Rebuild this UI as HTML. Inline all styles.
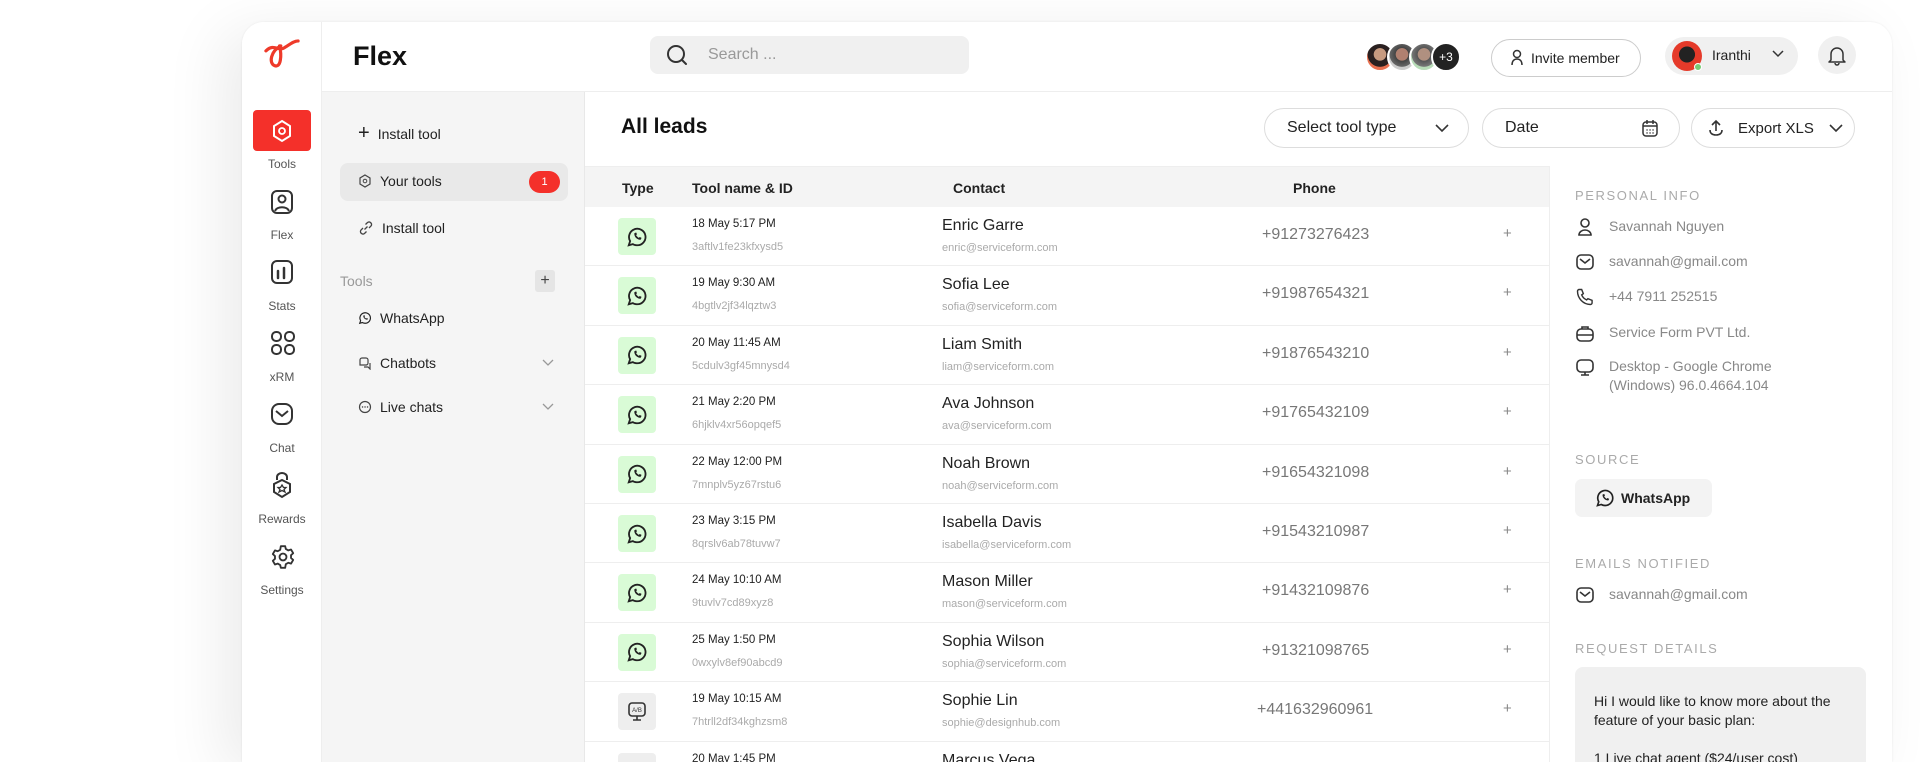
<!DOCTYPE html>
<html style="width:1920px;height:762px;overflow:hidden"><head><meta charset="utf-8"><style>
*{box-sizing:border-box;margin:0;padding:0}
html,body{width:1920px;height:762px;overflow:hidden}
body{background:#fff;font-family:"Liberation Sans",sans-serif;color:#222;position:relative}
.card{position:absolute;left:242px;top:22px;width:1650px;height:740px;background:#fff;border-radius:22px 22px 0 0;box-shadow:-20px 10px 60px rgba(0,0,0,0.08),0 0 2px rgba(0,0,0,0.08);overflow:hidden}
.a{position:absolute}
.nav{left:0;top:0;width:80px;height:740px;border-right:1px solid #eee;background:#fff}
.nl{position:absolute;width:80px;text-align:center;font-size:12px;color:#555}
.ni{position:absolute;left:28px}
.side{left:80px;top:70px;width:263px;height:670px;background:#f5f5f5;border-right:1px solid #e8e8e8}
.si{position:absolute;left:36px;font-size:14px;color:#222;display:flex;align-items:center;gap:8px}
.hdr{left:80px;top:0;width:1570px;height:70px;border-bottom:1px solid #eee}
.pill{position:absolute;border:1px solid #ddd;border-radius:20px;display:flex;align-items:center;font-size:16px;color:#222}
.th{position:absolute;font-size:14px;font-weight:bold;color:#222}
.row{position:absolute;left:343px;width:964px;height:59.4px;border-bottom:1px solid #eee}
.ic{position:absolute;left:33px;top:11px;width:38px;height:37px;border-radius:4px;background:#d9fbd6;display:flex;align-items:center;justify-content:center}
.ic.g{background:#eee}
.dt{position:absolute;left:107px;top:11px;font-size:11.5px;color:#222}
.id{position:absolute;left:107px;top:34px;font-size:11px;color:#aaa}
.nm{position:absolute;left:357px;top:10px;font-size:16px;color:#222}
.em{position:absolute;left:357px;top:35px;font-size:11px;color:#aaa}
.ph{position:absolute;left:677px;top:19px;font-size:16px;color:#777}
.pl{position:absolute;left:918px;top:18px;font-size:15px;color:#888}
.rp{left:1307px;top:144px;width:343px;height:596px;border-left:1px solid #eee}
.lab{position:absolute;left:25px;font-size:13px;letter-spacing:1.6px;color:#aaa}
.it{position:absolute;left:25px;display:flex;gap:14px;font-size:14px;color:#888;line-height:19px}
</style></head><body>
<div class="card">
 <div class="a nav">
  <svg class="a" style="left:17px;top:14px" width="46" height="42" viewBox="0 0 34 34"><path d="M4 12c6-6 10 0 14-2s8-6 12-6M16 8c-8 4-10 14-5 16s6-8 4-16" fill="none" stroke="#ee3a2a" stroke-width="2.6" stroke-linecap="round"/></svg>
  <div class="a" style="left:11px;top:88px;width:58px;height:41px;background:#f4302a;border-radius:4px"></div>
  <svg class="a" style="left:29px;top:97px" width="22" height="24" viewBox="0 0 22 24"><path d="M11 2l8 5v10l-8 5-8-5V7z" fill="none" stroke="#fff" stroke-width="2"/><circle cx="11" cy="12" r="3" fill="none" stroke="#fff" stroke-width="1.8"/></svg>
  <div class="nl" style="top:135px">Tools</div>
  <svg class="ni" style="top:167px" width="24" height="26" viewBox="0 0 24 26"><rect x="2" y="2" width="20" height="22" rx="5" fill="none" stroke="#333" stroke-width="2"/><circle cx="12" cy="10" r="3.5" fill="none" stroke="#333" stroke-width="2"/><path d="M5 22c2-5 12-5 14 0" fill="none" stroke="#333" stroke-width="2"/></svg>
  <div class="nl" style="top:206px">Flex</div>
  <svg class="ni" style="top:237px" width="24" height="26" viewBox="0 0 24 26"><rect x="2" y="2" width="20" height="22" rx="5" fill="none" stroke="#333" stroke-width="2"/><path d="M8 12v7M14 9v10" stroke="#333" stroke-width="2.5" stroke-linecap="round"/></svg>
  <div class="nl" style="top:277px">Stats</div>
  <svg class="ni" style="top:308px" width="26" height="26" viewBox="0 0 26 26"><g fill="none" stroke="#333" stroke-width="2"><rect x="2" y="2" width="9" height="9" rx="4"/><rect x="15" y="2" width="9" height="9" rx="4"/><rect x="2" y="15" width="9" height="9" rx="4"/><rect x="15" y="15" width="9" height="9" rx="4"/></g></svg>
  <div class="nl" style="top:348px">xRM</div>
  <svg class="ni" style="top:380px" width="24" height="24" viewBox="0 0 24 24"><rect x="2" y="2" width="20" height="20" rx="7" fill="none" stroke="#333" stroke-width="2"/><path d="M6 9l6 5 6-5" fill="none" stroke="#333" stroke-width="2"/></svg>
  <div class="nl" style="top:419px">Chat</div>
  <svg class="ni" style="top:450px" width="24" height="28" viewBox="0 0 24 28"><path d="M7 8V5a5 4 0 0110 0v3" fill="none" stroke="#333" stroke-width="2"/><path d="M12 8l8 4v8l-8 5-8-5v-8z" fill="none" stroke="#333" stroke-width="2"/><path d="M12 13l1.5 2.5h2.5l-2 2 1 2.5-3-1.5-3 1.5 1-2.5-2-2h2.5z" fill="none" stroke="#333" stroke-width="1.3"/></svg>
  <div class="nl" style="top:490px">Rewards</div>
  <svg class="ni" style="top:522px" width="26" height="26" viewBox="0 0 24 24"><path d="M10 2h4l.6 2.6 2.3 1.3 2.5-.8 2 3.4-2 1.8v2.6l2 1.8-2 3.4-2.5-.8-2.3 1.3L14 22h-4l-.6-2.6-2.3-1.3-2.5.8-2-3.4 2-1.8v-2.6l-2-1.8 2-3.4 2.5.8 2.3-1.3z" fill="none" stroke="#333" stroke-width="1.7" stroke-linejoin="round"/><circle cx="12" cy="12" r="3.2" fill="none" stroke="#333" stroke-width="1.7"/></svg>
  <div class="nl" style="top:561px">Settings</div>
 </div>
 <div class="a hdr">
  <div class="a" style="left:31px;top:19px;font-size:27px;font-weight:bold;color:#111">Flex</div>
  <div class="a" style="left:328px;top:14px;width:319px;height:38px;background:#f0f0f0;border-radius:8px"></div>
  <svg class="a" style="left:342px;top:20px" width="26" height="26" viewBox="0 0 26 26"><circle cx="12" cy="12" r="8" fill="none" stroke="#333" stroke-width="2"/><path d="M18 18l4 4" stroke="#333" stroke-width="2" stroke-linecap="round"/></svg>
  <div class="a" style="left:386px;top:24px;font-size:16px;color:#999">Search ...</div>
  <div class="a" style="left:1043px;top:20px;width:30px;height:30px;border-radius:50%;background:radial-gradient(circle at 50% 40%,#c79a80 30%,#2a2020 32%,#2a2020 60%,#e87050 62%);border:2px solid #fff"></div>
  <div class="a" style="left:1065px;top:20px;width:30px;height:30px;border-radius:50%;background:radial-gradient(circle at 50% 40%,#b08070 30%,#444 32%,#666 60%,#ccc 62%);border:2px solid #fff"></div>
  <div class="a" style="left:1087px;top:20px;width:30px;height:30px;border-radius:50%;background:radial-gradient(circle at 50% 40%,#b09080 30%,#555 32%,#777 60%,#b8dcb8 62%);border:2px solid #fff"></div>
  <div class="a" style="left:1109px;top:20px;width:30px;height:30px;border-radius:50%;background:#222;border:2px solid #fff;color:#fff;font-size:12px;text-align:center;line-height:26px">+3</div>
  <div class="pill" style="left:1169px;top:17px;width:150px;height:38px;font-size:14px;padding-left:18px;gap:7px;border-color:#ccc"><svg width="14" height="18" viewBox="0 0 14 18"><circle cx="7" cy="5" r="3.5" fill="none" stroke="#333" stroke-width="1.5"/><path d="M2 16c0-4 2-6 5-6s5 2 5 6" fill="none" stroke="#333" stroke-width="1.5"/></svg>Invite member</div>
  <div class="a" style="left:1343px;top:15px;width:133px;height:38px;background:#f0f0f0;border-radius:19px"></div>
  <div class="a" style="left:1350px;top:19px;width:30px;height:30px;border-radius:50%;background:radial-gradient(circle at 50% 45%,#222 35%,#e53a2a 37%)"></div>
  <div class="a" style="left:1372px;top:41px;width:8px;height:8px;border-radius:50%;background:#7c7;border:1px solid #fff"></div>
  <div class="a" style="left:1390px;top:25px;font-size:14px;color:#222">Iranthi</div>
  <svg class="a" style="left:1449px;top:27px" width="14" height="10" viewBox="0 0 14 10"><path d="M2 2l5 5 5-5" fill="none" stroke="#333" stroke-width="1.5"/></svg>
  <div class="a" style="left:1496px;top:14px;width:38px;height:38px;border-radius:50%;background:#f0f0f0"></div>
  <svg class="a" style="left:1505px;top:22px" width="20" height="22" viewBox="0 0 20 22"><path d="M4 16V10a6 6 0 0112 0v6l2 2H2z M8 19a2 2 0 004 0" fill="none" stroke="#333" stroke-width="1.5" stroke-linejoin="round"/></svg>
 </div>
 <div class="a side">
  <div class="si" style="top:30px"><span style="font-size:20px;font-weight:300">+</span>Install tool</div>
  <div class="a" style="left:18px;top:71px;width:228px;height:38px;background:#e9e9e9;border-radius:8px"></div>
  <div class="si" style="top:81px"><svg width="14" height="14" viewBox="0 0 14 14"><path d="M7 1l5 3v6l-5 3-5-3V4z" fill="none" stroke="#444" stroke-width="1.2"/><circle cx="7" cy="7" r="1.8" fill="none" stroke="#444"/></svg>Your tools</div>
  <div class="a" style="left:207px;top:79px;width:31px;height:22px;background:#f4302a;border-radius:11px;color:#fff;font-size:11px;text-align:center;line-height:22px">1</div>
  <div class="si" style="top:128px"><svg width="16" height="16" viewBox="0 0 16 16"><path d="M6.5 9.5l3-3M5 8l-2 2a2.5 2.5 0 003.5 3.5l2-2M11 8l2-2a2.5 2.5 0 00-3.5-3.5l-2 2" fill="none" stroke="#444" stroke-width="1.3"/></svg>Install tool</div>
  <div class="a" style="left:18px;top:181px;font-size:14px;color:#999">Tools</div>
  <div class="a" style="left:213px;top:178px;width:20px;height:22px;background:#e5e5e5;border-radius:3px;text-align:center;line-height:22px;font-size:16px;color:#444">+</div>
  <div class="si" style="top:218px"><svg width="14" height="14" viewBox="0 0 24 24"><path d="M3 21l1.5-4.5A9 9 0 1112 21a9 9 0 01-4.5-1.2z" fill="none" stroke="#222" stroke-width="2"/><path d="M9 8c0 4 3 7 7 7l1-2-2-1-1 1c-1-.5-2.5-2-3-3l1-1-1-2z" fill="#222"/></svg>WhatsApp</div>
  <div class="si" style="top:263px"><svg width="14" height="14" viewBox="0 0 14 14"><path d="M2 9V4a2 2 0 012-2h4a2 2 0 012 2v3a2 2 0 01-2 2H4z M6 11h4l2 2V7" fill="none" stroke="#444" stroke-width="1.2"/></svg>Chatbots</div>
  <div class="si" style="top:307px"><svg width="14" height="14" viewBox="0 0 14 14"><circle cx="7" cy="7" r="5.5" fill="none" stroke="#444" stroke-width="1.2"/><path d="M4.5 7h.1M7 7h.1M9.5 7h.1" stroke="#444" stroke-width="1.4" stroke-linecap="round"/></svg>Live chats</div>
  <svg class="a" style="left:220px;top:267px" width="12" height="8" viewBox="0 0 12 8"><path d="M1 1l5 5 5-5" fill="none" stroke="#999" stroke-width="1.3"/></svg>
  <svg class="a" style="left:220px;top:311px" width="12" height="8" viewBox="0 0 12 8"><path d="M1 1l5 5 5-5" fill="none" stroke="#999" stroke-width="1.3"/></svg>
 </div>
 <div class="a" style="left:379px;top:93px;font-size:21px;font-weight:bold;color:#111">All leads</div>
 <div class="pill" style="left:1022px;top:86px;width:205px;height:40px;padding-left:22px">Select tool type<svg style="position:absolute;right:18px" width="16" height="10" viewBox="0 0 16 10"><path d="M2 2l6 6 6-6" fill="none" stroke="#333" stroke-width="1.6"/></svg></div>
 <div class="pill" style="left:1240px;top:86px;width:198px;height:40px;padding-left:22px">Date<svg style="position:absolute;right:20px" width="18" height="20" viewBox="0 0 18 20"><rect x="2" y="4" width="14" height="14" rx="3" fill="none" stroke="#333" stroke-width="1.5"/><path d="M2 8h14M6 2v4M12 2v4" stroke="#333" stroke-width="1.5"/><path d="M6 12h.1M9 12h.1M12 12h.1M6 15h.1M9 15h.1M12 15h.1" stroke="#333" stroke-width="1.4" stroke-linecap="round"/></svg></div>
 <div class="pill" style="left:1449px;top:86px;width:164px;height:40px;padding-left:16px;font-size:15px;gap:14px"><svg width="16" height="18" viewBox="0 0 16 18"><path d="M8 12V2M4 6l4-4 4 4M2 11c0 3 2 5 6 5s6-2 6-5" fill="none" stroke="#333" stroke-width="1.6"/></svg>Export XLS<svg width="16" height="10" viewBox="0 0 16 10"><path d="M2 2l6 6 6-6" fill="none" stroke="#333" stroke-width="1.6"/></svg></div>
 <div class="a" style="left:343px;top:144px;width:964px;height:41px;background:#f4f4f4;border-top:1px solid #eee"></div>
 <div class="th" style="left:380px;top:158px">Type</div>
 <div class="th" style="left:450px;top:158px">Tool name &amp; ID</div>
 <div class="th" style="left:711px;top:158px">Contact</div>
 <div class="th" style="left:1051px;top:158px">Phone</div>

 <div class="row" style="top:185px"><div class="ic"><svg width="22" height="22" viewBox="0 0 24 24"><path d="M3 21l1.5-4.5A9 9 0 1112 21a9 9 0 01-4.5-1.2z" fill="none" stroke="#222" stroke-width="2"/><path d="M9 8c0 4 3 7 7 7l1-2-2-1-1 1c-1-.5-2.5-2-3-3l1-1-1-2z" fill="#222"/></svg></div><div class="dt">18 May 5:17 PM</div><div class="id">3aftlv1fe23kfxysd5</div><div class="nm">Enric Garre</div><div class="em">enric@serviceform.com</div><div class="ph">+91273276423</div><div class="pl">+</div></div>
 <div class="row" style="top:244.4px"><div class="ic"><svg width="22" height="22" viewBox="0 0 24 24"><path d="M3 21l1.5-4.5A9 9 0 1112 21a9 9 0 01-4.5-1.2z" fill="none" stroke="#222" stroke-width="2"/><path d="M9 8c0 4 3 7 7 7l1-2-2-1-1 1c-1-.5-2.5-2-3-3l1-1-1-2z" fill="#222"/></svg></div><div class="dt">19 May 9:30 AM</div><div class="id">4bgtlv2jf34lqztw3</div><div class="nm">Sofia Lee</div><div class="em">sofia@serviceform.com</div><div class="ph">+91987654321</div><div class="pl">+</div></div>
 <div class="row" style="top:303.8px"><div class="ic"><svg width="22" height="22" viewBox="0 0 24 24"><path d="M3 21l1.5-4.5A9 9 0 1112 21a9 9 0 01-4.5-1.2z" fill="none" stroke="#222" stroke-width="2"/><path d="M9 8c0 4 3 7 7 7l1-2-2-1-1 1c-1-.5-2.5-2-3-3l1-1-1-2z" fill="#222"/></svg></div><div class="dt">20 May 11:45 AM</div><div class="id">5cdulv3gf45mnysd4</div><div class="nm">Liam Smith</div><div class="em">liam@serviceform.com</div><div class="ph">+91876543210</div><div class="pl">+</div></div>
 <div class="row" style="top:363.2px"><div class="ic"><svg width="22" height="22" viewBox="0 0 24 24"><path d="M3 21l1.5-4.5A9 9 0 1112 21a9 9 0 01-4.5-1.2z" fill="none" stroke="#222" stroke-width="2"/><path d="M9 8c0 4 3 7 7 7l1-2-2-1-1 1c-1-.5-2.5-2-3-3l1-1-1-2z" fill="#222"/></svg></div><div class="dt">21 May 2:20 PM</div><div class="id">6hjklv4xr56opqef5</div><div class="nm">Ava Johnson</div><div class="em">ava@serviceform.com</div><div class="ph">+91765432109</div><div class="pl">+</div></div>
 <div class="row" style="top:422.6px"><div class="ic"><svg width="22" height="22" viewBox="0 0 24 24"><path d="M3 21l1.5-4.5A9 9 0 1112 21a9 9 0 01-4.5-1.2z" fill="none" stroke="#222" stroke-width="2"/><path d="M9 8c0 4 3 7 7 7l1-2-2-1-1 1c-1-.5-2.5-2-3-3l1-1-1-2z" fill="#222"/></svg></div><div class="dt">22 May 12:00 PM</div><div class="id">7mnplv5yz67rstu6</div><div class="nm">Noah Brown</div><div class="em">noah@serviceform.com</div><div class="ph">+91654321098</div><div class="pl">+</div></div>
 <div class="row" style="top:482px"><div class="ic"><svg width="22" height="22" viewBox="0 0 24 24"><path d="M3 21l1.5-4.5A9 9 0 1112 21a9 9 0 01-4.5-1.2z" fill="none" stroke="#222" stroke-width="2"/><path d="M9 8c0 4 3 7 7 7l1-2-2-1-1 1c-1-.5-2.5-2-3-3l1-1-1-2z" fill="#222"/></svg></div><div class="dt">23 May 3:15 PM</div><div class="id">8qrslv6ab78tuvw7</div><div class="nm">Isabella Davis</div><div class="em">isabella@serviceform.com</div><div class="ph">+91543210987</div><div class="pl">+</div></div>
 <div class="row" style="top:541.4px"><div class="ic"><svg width="22" height="22" viewBox="0 0 24 24"><path d="M3 21l1.5-4.5A9 9 0 1112 21a9 9 0 01-4.5-1.2z" fill="none" stroke="#222" stroke-width="2"/><path d="M9 8c0 4 3 7 7 7l1-2-2-1-1 1c-1-.5-2.5-2-3-3l1-1-1-2z" fill="#222"/></svg></div><div class="dt">24 May 10:10 AM</div><div class="id">9tuvlv7cd89xyz8</div><div class="nm">Mason Miller</div><div class="em">mason@serviceform.com</div><div class="ph">+91432109876</div><div class="pl">+</div></div>
 <div class="row" style="top:600.8px"><div class="ic"><svg width="22" height="22" viewBox="0 0 24 24"><path d="M3 21l1.5-4.5A9 9 0 1112 21a9 9 0 01-4.5-1.2z" fill="none" stroke="#222" stroke-width="2"/><path d="M9 8c0 4 3 7 7 7l1-2-2-1-1 1c-1-.5-2.5-2-3-3l1-1-1-2z" fill="#222"/></svg></div><div class="dt">25 May 1:50 PM</div><div class="id">0wxylv8ef90abcd9</div><div class="nm">Sophia Wilson</div><div class="em">sophia@serviceform.com</div><div class="ph">+91321098765</div><div class="pl">+</div></div>
 <div class="row" style="top:660.2px"><div class="ic g"><svg width="20" height="22" viewBox="0 0 20 22"><rect x="2" y="2" width="16" height="13" rx="3" fill="none" stroke="#333" stroke-width="1.6"/><text x="10" y="11" font-size="6" text-anchor="middle" fill="#333" font-family="Liberation Sans">A/B</text><path d="M10 15v4M6 19h8" stroke="#333" stroke-width="1.6"/></svg></div><div class="dt">19 May 10:15 AM</div><div class="id">7htrll2df34kghzsm8</div><div class="nm">Sophie Lin</div><div class="em">sophie@designhub.com</div><div class="ph" style="left:672px">+441632960961</div><div class="pl">+</div></div>
 <div class="row" style="top:719.6px;border-bottom:none"><div class="ic g"></div><div class="dt">20 May 1:45 PM</div><div class="nm">Marcus Vega</div></div>

 <div class="a rp">
  <div class="lab" style="top:22px">PERSONAL INFO</div>
  <div class="it" style="top:51px"><svg width="20" height="20" viewBox="0 0 20 20"><circle cx="10" cy="6" r="4" fill="none" stroke="#333" stroke-width="1.6"/><path d="M4 18c0-3 3-5 6-5s6 2 6 5z" fill="none" stroke="#333" stroke-width="1.6"/></svg>Savannah Nguyen</div>
  <div class="it" style="top:86px"><svg width="20" height="20" viewBox="0 0 20 20"><rect x="2" y="3" width="16" height="14" rx="4" fill="none" stroke="#333" stroke-width="1.6"/><path d="M5 7l5 4 5-4" fill="none" stroke="#333" stroke-width="1.6"/></svg>savannah@gmail.com</div>
  <div class="it" style="top:121px"><svg width="20" height="20" viewBox="0 0 24 24"><path d="M5 3h3l2 5-2 1.5a11 11 0 006 6L15.5 14l5 2v3a2 2 0 01-2 2A16 16 0 013 5a2 2 0 012-2z" fill="none" stroke="#333" stroke-width="1.7"/></svg>+44 7911 252515</div>
  <div class="it" style="top:157px"><svg width="20" height="20" viewBox="0 0 20 20"><rect x="2" y="6" width="16" height="12" rx="4" fill="none" stroke="#333" stroke-width="1.6"/><path d="M7 6V4h6v2M2 12h16" fill="none" stroke="#333" stroke-width="1.6"/></svg>Service Form PVT Ltd.</div>
  <div class="it" style="top:191px"><svg width="20" height="20" viewBox="0 0 20 20"><rect x="2" y="3" width="16" height="12" rx="4" fill="none" stroke="#333" stroke-width="1.6"/><path d="M10 15v3M6 18h8" stroke="#333" stroke-width="1.6"/></svg><span>Desktop - Google Chrome<br>(Windows) 96.0.4664.104</span></div>
  <div class="lab" style="top:286px">SOURCE</div>
  <div class="a" style="left:25px;top:313px;width:137px;height:38px;background:#f3f3f3;border-radius:7px;display:flex;align-items:center;gap:6px;padding-left:20px;font-size:14px;font-weight:bold;color:#222"><svg width="20" height="20" viewBox="0 0 24 24"><path d="M3 21l1.5-4.5A9 9 0 1112 21a9 9 0 01-4.5-1.2z" fill="none" stroke="#222" stroke-width="2"/><path d="M9 8c0 4 3 7 7 7l1-2-2-1-1 1c-1-.5-2.5-2-3-3l1-1-1-2z" fill="#222"/></svg>WhatsApp</div>
  <div class="lab" style="top:390px">EMAILS NOTIFIED</div>
  <div class="it" style="top:419px"><svg width="20" height="20" viewBox="0 0 20 20"><rect x="2" y="3" width="16" height="14" rx="4" fill="none" stroke="#333" stroke-width="1.6"/><path d="M5 7l5 4 5-4" fill="none" stroke="#333" stroke-width="1.6"/></svg>savannah@gmail.com</div>
  <div class="lab" style="top:475px">REQUEST DETAILS</div>
  <div class="a" style="left:25px;top:501px;width:291px;height:200px;background:#f0f0f0;border-radius:8px;padding:25px 19px;font-size:14px;line-height:19px;color:#222">Hi I would like to know more about the feature of your basic plan:<br><br>1 Live chat agent ($24/user cost)</div>
 </div>
</div>
</body></html>
